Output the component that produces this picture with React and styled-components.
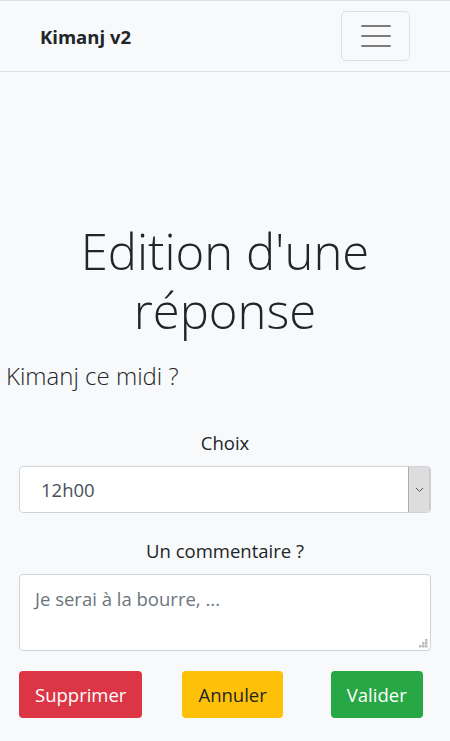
import styled, { createGlobalStyle } from 'styled-components';

const GlobalStyle = createGlobalStyle`
    body {
        margin: 0;
        background: #f8f9fa;
        color: #212529;
        font-family: "Open Sans", "Noto Sans", sans-serif;
    }
    * {
        box-sizing: border-box;
    }
`;

const Navbar = styled.nav`
    height: 72px;
    display: flex;
    align-items: center;
    justify-content: space-between;
    padding: 0 40px;
    border-top: 1px solid #dee2e6;
    border-bottom: 1px solid #dee2e6;
    background: #f8f9fa;
`;

const Brand = styled.a`
    font-size: 18.5px;
    font-weight: 700;
    color: #212529;
    text-decoration: none;
`;

const Toggler = styled.button`
    width: 69px;
    height: 50px;
    display: flex;
    flex-direction: column;
    align-items: center;
    justify-content: center;
    gap: 8px;
    background: transparent;
    border: 1px solid rgba(0, 0, 0, 0.1);
    border-radius: 5px;
    margin-top: -1px;
`;

const TogglerBar = styled.span`
    width: 30px;
    height: 2px;
    background: rgba(0, 0, 0, 0.5);
    border-radius: 1px;
`;

const Main = styled.main`
    padding-top: 150px;
    display: flex;
    flex-direction: column;
`;

const Title = styled.h1`
    margin: 0;
    text-align: center;
    font-size: 49px;
    font-weight: 350;
    line-height: 59px;
`;

const Lead = styled.p`
    margin: 19px 0 0 6px;
    font-size: 24px;
    font-weight: 300;
`;

const Form = styled.form`
    padding: 0 19px;
    display: flex;
    flex-direction: column;
`;

const Label = styled.label`
    display: block;
    text-align: center;
    font-size: 18.5px;
    margin: ${(p) => p.$top}px 0 11px;
`;

const SelectBox = styled.div`
    height: 47px;
    display: flex;
    background: #fff;
    border: 1px solid #ced4da;
    border-radius: 4px;
    overflow: hidden;
`;

const SelectValue = styled.div`
    flex: 1;
    display: flex;
    align-items: center;
    padding-left: 21px;
    font-size: 18.5px;
    color: #495057;
`;

const ArrowBox = styled.div`
    width: 22px;
    display: flex;
    align-items: center;
    justify-content: center;
    background: #dddddd;
    border-left: 1px solid #adadad;
    border-right: 1px solid #c8c8c8;
`;

const TextArea = styled.div`
    position: relative;
    height: 77px;
    background: #fff;
    border: 1px solid #ced4da;
    border-radius: 4px;
    padding: 11px 15px;
    font-size: 18.5px;
    color: #6c757d;
`;

const Grip = styled.svg`
    position: absolute;
    right: 2px;
    bottom: 2px;
`;

const Actions = styled.div`
    display: flex;
    margin-top: 20px;
`;

const Button = styled.button`
    height: 47px;
    padding: 0 16px;
    margin-left: ${(p) => p.$gap || 0}px;
    border: none;
    border-radius: 4px;
    font-family: inherit;
    font-size: 18.5px;
    color: ${(p) => (p.$variant === 'warning' ? '#212529' : '#fff')};
    background: ${(p) =>
        p.$variant === 'danger' ? '#dc3545' : p.$variant === 'warning' ? '#ffc107' : '#28a745'};
`;

function App() {
    return (
        <>
            <GlobalStyle />
            <Navbar>
                <Brand href="#">Kimanj v2</Brand>
                <Toggler>
                    <TogglerBar />
                    <TogglerBar />
                    <TogglerBar />
                </Toggler>
            </Navbar>
            <Main>
                <Title>
                    Edition d'une
                    <br />
                    réponse
                </Title>
                <Lead>Kimanj ce midi ?</Lead>
                <Form>
                    <Label $top={38}>Choix</Label>
                    <SelectBox>
                        <SelectValue>12h00</SelectValue>
                        <ArrowBox>
                            <svg width="9" height="6" viewBox="0 0 9 6">
                                <path d="M1 1l3.5 3.5L8 1" fill="none" stroke="#555" strokeWidth="1" />
                            </svg>
                        </ArrowBox>
                    </SelectBox>
                    <Label $top={25}>Un commentaire ?</Label>
                    <TextArea>
                        Je serai à la bourre, ...
                        <Grip width="9" height="9" viewBox="0 0 9 9">
                            <rect x="6" y="0" width="2.5" height="2.5" fill="#bbb" />
                            <rect x="3" y="3" width="2.5" height="2.5" fill="#bbb" />
                            <rect x="6" y="3" width="2.5" height="2.5" fill="#bbb" />
                            <rect x="0" y="6" width="2.5" height="2.5" fill="#bbb" />
                            <rect x="3" y="6" width="2.5" height="2.5" fill="#bbb" />
                            <rect x="6" y="6" width="2.5" height="2.5" fill="#bbb" />
                        </Grip>
                    </TextArea>
                    <Actions>
                        <Button $variant="danger">Supprimer</Button>
                        <Button $variant="warning" $gap={40}>Annuler</Button>
                        <Button $variant="success" $gap={48}>Valider</Button>
                    </Actions>
                </Form>
            </Main>
        </>
    );
}

export default App;
